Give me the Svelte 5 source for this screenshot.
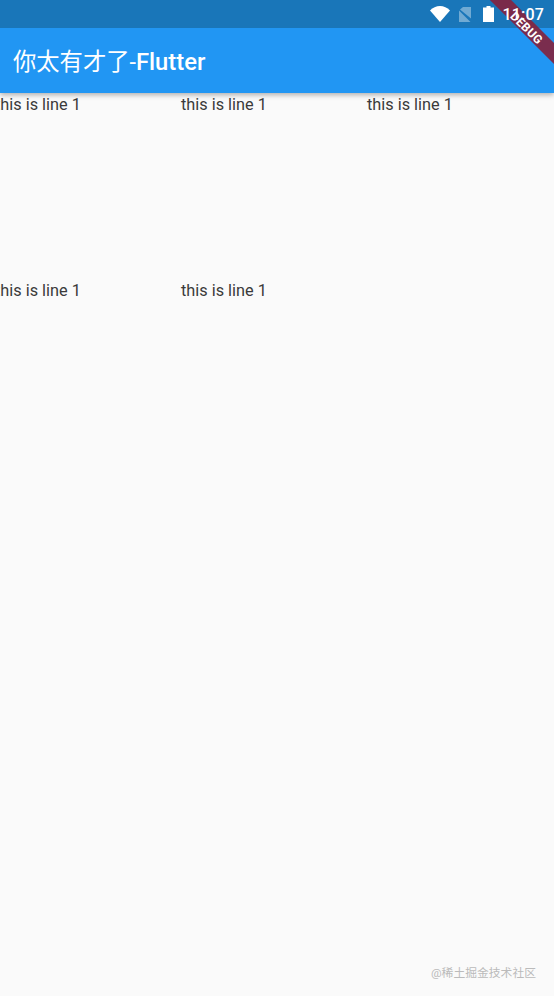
<script>
  const cells = Array(5).fill('this is line 1');
</script>

<div class="page">
  <header class="head">
    <div class="status">
      <svg class="wifi" width="20" height="16" viewBox="0 0 20 16"><path d="M0 4.500C2.800 1.700 6.200 0 10 0s7.200 1.700 10 4.500L10 16z" fill="#fff"/></svg>
      <svg class="sim" width="12" height="15" viewBox="0 0 12 15"><path d="M4 0h8v11.500L1 2.500z" fill="#fff" opacity=".38"/><path d="M0 3.500V15h11.500z" fill="#fff" opacity=".38"/></svg>
      <svg class="batt" width="11" height="16" viewBox="0 0 11 16"><path d="M3.500 0h4v1.500H11V16H0V1.500h3.500z" fill="#fff"/></svg>
      <span class="time">11:07</span>
    </div>
    <div class="bar">
      <span class="title">你太有才了-<b>Flutter</b></span>
    </div>
    <div class="ribbon">DEBUG</div>
  </header>
  <main class="grid">
    {#each cells as c}
      <div class="cell">{c}</div>
    {/each}
  </main>
  <div class="mark">@稀土掘金技术社区</div>
</div>

<style>
  :global(body) {
    margin: 0;
    background: #fafafa;
  }
  .page {
    position: relative;
    width: 554px;
    height: 996px;
    overflow: hidden;
    background: #fafafa;
    font-family: Roboto, "Noto Sans CJK SC", sans-serif;
  }
  .head {
    position: relative;
    z-index: 1;
    box-shadow: 0 2px 5px rgba(0, 0, 0, 0.3);
  }
  .status {
    height: 28px;
    background: #1976b9;
    display: flex;
    align-items: center;
    justify-content: flex-end;
    padding-right: 10px;
    box-sizing: border-box;
  }
  .wifi { margin-right: 9px; }
  .sim { margin-right: 12px; }
  .batt { margin-right: 8px; }
  .time {
    position: relative;
    z-index: 3;
    color: #fff;
    font-size: 16px;
    font-weight: 500;
    letter-spacing: 0.2px;
  }
  .bar {
    height: 65px;
    background: #2196f3;
    display: flex;
    align-items: center;
    padding-left: 13px;
    padding-bottom: 2px;
    box-sizing: border-box;
  }
  .title {
    color: #fff;
    font-size: 23.300px;
    font-weight: 400;
  }
  .title b { font-weight: 500; font-size: 23.800px; }
  .grid {
    display: grid;
    grid-template-columns: repeat(3, 186px);
    grid-auto-rows: 186px;
    margin-left: -5px;
    padding-top: 1px;
    color: #3a3a3a;
    font-size: 16.300px;
    line-height: 21px;
  }
  .mark {
    position: absolute;
    right: 18px;
    bottom: 16px;
    font-size: 11.800px;
    color: #bbb;
  }
  .ribbon {
    position: absolute;
    top: 21px;
    left: 469px;
    width: 120px;
    height: 15px;
    line-height: 18px;
    text-align: center;
    text-indent: -4px;
    transform: rotate(45deg);
    background: rgba(130, 36, 64, 0.92);
    color: #fff;
    font-size: 12px;
    font-weight: 700;
    letter-spacing: 0.3px;
    z-index: 2;
  }
</style>
